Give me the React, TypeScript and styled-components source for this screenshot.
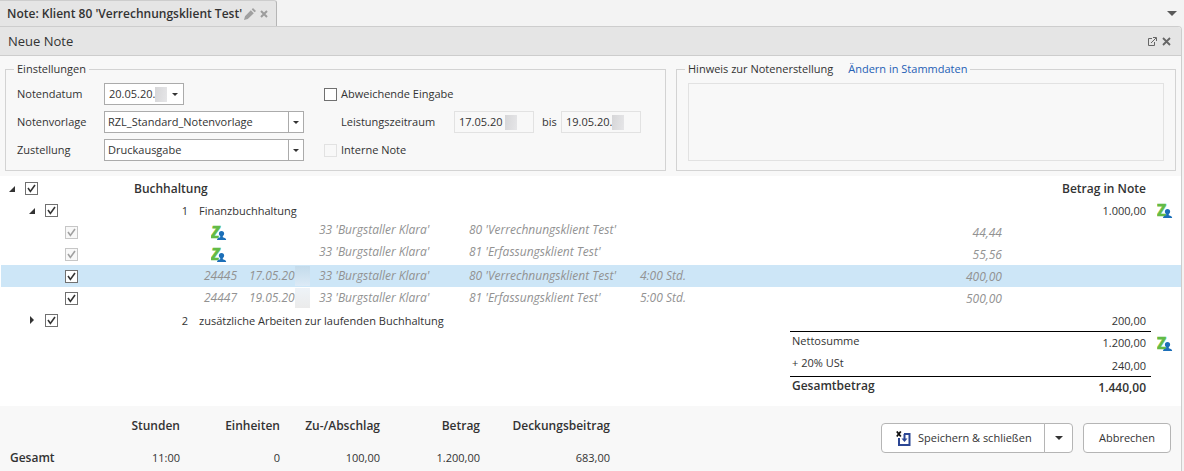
import React from 'react';
import styled, { createGlobalStyle, css } from 'styled-components';

const GlobalStyle = createGlobalStyle`
  * { box-sizing: border-box; }
  body {
    margin: 0;
    background: #f3f3f3;
    color: #333;
    font: 11px/16px "Open Sans", "Noto Sans", sans-serif;
  }
  button, input, select, textarea { font: inherit; color: inherit; }
  button { cursor: pointer; }
`;

const TabBar = styled.header`
  display: flex;
  align-items: stretch;
  justify-content: space-between;
  height: 26px;
  padding-right: 7px;
`;

const Tab = styled.div`
  display: flex;
  align-items: center;
  gap: 2px;
  padding: 0 6px 0 7px;
  background: #e5e5e5;
  border-top: 1px solid #cdcdcd;
  border-right: 1px solid #b5b5b5;
  border-top-right-radius: 3px;
  font-size: 12px;
  font-weight: 600;
`;

const IconButton = styled.button`
  display: inline-flex;
  align-items: center;
  justify-content: center;
  padding: 0;
  border: 0;
  background: none;
`;

const Panel = styled.main`
  margin-right: 2px;
  background: #fff;
  border: solid #cdcdcd;
  border-width: 1px 1px 1px 0;
  border-top-right-radius: 4px;
`;

const TitleBar = styled.div`
  display: flex;
  align-items: center;
  gap: 5px;
  height: 29px;
  padding: 0 10px 0 8px;
  background: #e5e5e5;
  border-bottom: 1px solid #cdcdcd;
  border-top-right-radius: 3px;
`;

const Title = styled.h1`
  flex: 1;
  margin: 0;
  font-size: 13px;
  font-weight: 400;
`;

const Settings = styled.section`
  display: flex;
  gap: 10px;
  padding: 5px;
  background: #f8f8f8;
`;

const Group = styled.fieldset<{ $grow?: boolean }>`
  display: flex;
  flex: ${(p) => (p.$grow ? '1 1 0' : '0 0 661px')};
  min-width: 0;
  margin: 0;
  padding: 6px 11px 9px;
  border: 1px solid #d3d3d3;
`;

const Legend = styled.legend`
  margin-left: -3px;
  padding: 0 3px;
`;

const StammdatenLink = styled.a`
  margin-left: 15px;
  color: #2560b5;
  text-decoration: none;
`;

const Fields = styled.div`
  display: grid;
  grid-template-columns: 87px 200px;
  grid-auto-rows: 22px;
  row-gap: 6px;
  align-items: center;
  margin-right: 20px;
`;

const Options = styled.div`
  display: grid;
  grid-auto-rows: 22px;
  row-gap: 6px;
`;

const OptionLine = styled.div<{ $indent?: boolean }>`
  display: flex;
  align-items: center;
  gap: 4px;
  padding-left: ${(p) => (p.$indent ? '17px' : '0')};
`;

const PeriodLabel = styled.span`
  width: 109px;
`;

const Until = styled.span`
  width: 15px;
  margin-left: 4px;
`;

const DateBox = styled.span<{ $readOnly?: boolean }>`
  display: flex;
  align-items: center;
  width: 80px;
  height: 22px;
  padding-left: 4px;
  background: ${(p) => (p.$readOnly ? 'transparent' : '#fff')};
  border: 1px solid ${(p) => (p.$readOnly ? '#e2e2e2' : '#ababab')};
`;

const DateInput = styled.input`
  width: 46px;
  padding: 0;
  border: 0;
  background: none;
  outline: 0;
`;

const Smudge = styled.span`
  width: 12px;
  height: 15px;
  background: linear-gradient(100deg, #d6d6d8, #e6e6e8);
`;

const RowSmudge = styled.span<{ $selected?: boolean }>`
  width: 15px;
  height: 20px;
  background: ${(p) => (p.$selected ? 'linear-gradient(#c3dbeb, #dceaf6)' : 'linear-gradient(#eef3f8, #ebebeb)')};
`;

const CaretButton = styled(IconButton)`
  flex: 1;
  height: 100%;
`;

const SelectBox = styled.span`
  display: grid;
  grid-template-columns: 1fr 15px;
  height: 22px;
  background: #fff;
  border: 1px solid #ababab;

  select {
    grid-area: 1 / 1 / 2 / 3;
    appearance: none;
    padding: 0 18px 0 3px;
    border: 0;
    background: none;
    outline: 0;
  }
`;

const SelectCaret = styled.span`
  grid-area: 1 / 2;
  display: flex;
  align-items: center;
  justify-content: center;
  border-left: 1px solid #ababab;
  pointer-events: none;
`;

const Note = styled.textarea`
  flex: 1;
  height: 78px;
  resize: none;
  background: transparent;
  border: 1px solid #e2e2e2;
`;

const CheckFrame = styled.span`
  display: inline-grid;
  width: 13px;
  height: 13px;

  input, svg { grid-area: 1 / 1; }
  input {
    appearance: none;
    width: 13px;
    height: 13px;
    margin: 0;
    background: #fff;
    border: 1px solid #707070;
  }
  svg { color: #333; pointer-events: none; }
  input:disabled { background: #f8f8f8; border-color: #e2e2e2; }
  input:disabled:checked { border-color: #c6c6c6; }
  input:disabled + svg { color: #a0a0a0; }
`;

const Positions = styled.table`
  width: 100%;
  padding: 1px 0 7px 1px;
  table-layout: fixed;
  border-spacing: 0;
`;

const Row = styled.tr<{ $kind?: 'group' | 'detail'; $selected?: boolean }>`
  background: ${(p) => (p.$selected ? '#cde6f7' : 'transparent')};
  ${(p) => p.$kind === 'group' && css`font-size: 12px; font-weight: 600;`}
  ${(p) => p.$kind === 'detail' && css`color: #929292; font-size: 12px; font-style: italic;`}
`;

const Cell = styled.td<{ $right?: number; $top?: boolean; $line?: boolean; $bold?: boolean }>`
  height: ${(p) => (p.$line ? '23px' : '22px')};
  padding: ${(p) => (p.$top ? '0 0 4px' : '0')};
  white-space: nowrap;
  vertical-align: middle;
  ${(p) => p.$right !== undefined && css`padding-right: ${p.$right}px; text-align: right;`}
  ${(p) => p.$line && css`border-top: 1px solid #000;`}
  ${(p) => p.$bold && css`font-size: 12px; font-weight: 600;`}
`;

const TextCell = styled(Cell)`
  padding-top: 2px;
`;

const SumLabel = styled(Cell)`
  padding: 0 0 4px 2px;
`;

const Tree = styled.div<{ $level: number }>`
  display: flex;
  align-items: center;
  padding-left: ${(p) => p.$level * 20 + 1}px;
`;

const Expander = styled(IconButton)`
  width: 20px;
  height: 16px;
  margin-right: 3px;
`;

const ExpanderGap = styled.span`
  width: 23px;
`;

const BadgeSvg = styled.svg`
  display: block;
`;

const IconSlot = styled.div<{ $indent: number }>`
  padding-left: ${(p) => p.$indent}px;
`;

const MaskedDate = styled.div`
  display: flex;
  align-items: center;
`;

const Footer = styled.footer`
  display: flex;
  align-items: flex-start;
  justify-content: space-between;
  padding: 4px 10px 0 0;
  background: #f8f8f8;
`;

const Summary = styled.table`
  table-layout: fixed;
  width: 610px;
  border-spacing: 0;

  th, td { padding: 0; text-align: right; height: 32px; }
  th { font-size: 12px; font-weight: 600; }
  tr > :first-child { padding-left: 10px; text-align: left; }
`;

const Actions = styled.div`
  display: flex;
  gap: 10px;
  padding-top: 13px;
`;

const Button = styled.button`
  display: flex;
  align-items: center;
  justify-content: center;
  height: 30px;
  padding: 0;
  background: #fff;
  border: 1px solid #b5b5b5;
  border-radius: 4px;
  white-space: nowrap;
`;

const SplitButton = styled.div`
  display: flex;
`;

const SaveButton = styled(Button)`
  gap: 7px;
  justify-content: flex-start;
  width: 164px;
  padding-left: 14px;
  border-radius: 4px 0 0 4px;
`;

const MoreButton = styled(Button)`
  width: 29px;
  margin-left: -1px;
  border-radius: 0 4px 4px 0;
`;

const CancelButton = styled(Button)`
  width: 88px;
`;

const Caret = ({ width = 6, color = '#333' }: { width?: number; color?: string }) => (
  <svg width={width} height={Math.ceil(width / 2)} viewBox="0 0 8 4" preserveAspectRatio="none" aria-hidden="true">
    <path d="M0 0h8L4 4z" fill={color} />
  </svg>
);

const ClientBadge = () => (
  <BadgeSvg width="16" height="22" viewBox="0 -4 16 22" aria-hidden="true">
    <text x="0" y="13" fontFamily="Open Sans, sans-serif" fontWeight="700" fontSize="16" fill="#62bb46" stroke="#62bb46" strokeWidth="0.7">Z</text>
    <circle cx="10.500" cy="8.500" r="2.600" fill="#1c6fb8" />
    <path d="M9.200 10h2.600v2.200c2 .4 3.400 1.200 3.400 2.800H6c0-1.600 1.200-2.400 3.200-2.800z" fill="#1c6fb8" />
  </BadgeSvg>
);

type CheckProps = { id?: string; label?: string; checked?: boolean; disabled?: boolean };

const Check = ({ id, label, checked = false, disabled = false }: CheckProps) => (
  <CheckFrame>
    <input type="checkbox" id={id} aria-label={label} defaultChecked={checked} disabled={disabled} />
    {checked && (
      <svg width="13" height="13" viewBox="0 0 13 13" aria-hidden="true">
        <path d="M3 6L5.400 9.400L10 3" fill="none" stroke="currentColor" strokeWidth="1.600" />
      </svg>
    )}
  </CheckFrame>
);

type TreeCellProps = { level: number; label: string; open?: boolean; leaf?: boolean; disabled?: boolean };

const TreeCell = ({ level, label, open, leaf, disabled }: TreeCellProps) => (
  <Cell>
    <Tree $level={level}>
      {leaf ? (
        <ExpanderGap />
      ) : (
        <Expander aria-label={open ? 'Zuklappen' : 'Aufklappen'} aria-expanded={!!open}>
          <svg width="8" height="8" viewBox="0 0 8 8" aria-hidden="true">
            <path d={open ? 'M7 2v6H1z' : 'M2 0l4 4-4 4z'} fill="#333" />
          </svg>
        </Expander>
      )}
      <Check label={label} checked disabled={disabled} />
    </Tree>
  </Cell>
);

type Detail = {
  nr?: string;
  date?: string;
  person: string;
  client: string;
  hours?: string;
  amount: string;
  selected?: boolean;
};

const details: Detail[] = [
  { person: "33 'Burgstaller Klara'", client: "80 'Verrechnungsklient Test'", amount: '44,44' },
  { person: "33 'Burgstaller Klara'", client: "81 'Erfassungsklient Test'", amount: '55,56' },
  { nr: '24445', date: '17.05.20', person: "33 'Burgstaller Klara'", client: "80 'Verrechnungsklient Test'", hours: '4:00 Std.', amount: '400,00', selected: true },
  { nr: '24447', date: '19.05.20', person: "33 'Burgstaller Klara'", client: "81 'Erfassungsklient Test'", hours: '5:00 Std.', amount: '500,00' },
];

const DetailRow = ({ nr, date, person, client, hours, amount, selected }: Detail) => {
  const linked = !nr;
  return (
    <Row $kind="detail" $selected={selected}>
      <TreeCell level={2} leaf label={`${person} ${client}`} disabled={linked} />
      <Cell />
      <Cell>{linked ? <IconSlot $indent={12}><ClientBadge /></IconSlot> : <IconSlot $indent={5}>{nr}</IconSlot>}</Cell>
      <Cell>
        {date && <MaskedDate>{date}<RowSmudge $selected={selected} /></MaskedDate>}
      </Cell>
      <Cell $top={linked}>{person}</Cell>
      <Cell $top={linked}>{client}</Cell>
      <Cell>{hours}</Cell>
      <TextCell $right={0}>{amount}</TextCell>
      <Cell />
      <Cell />
    </Row>
  );
};

const columns = [133, 65, 50, 70, 150, 171, 150, undefined, 149, 30];

export default function App() {
  return (
    <>
      <GlobalStyle />
      <TabBar>
        <Tab>
          Note: Klient 80 'Verrechnungsklient Test'
          <IconButton aria-label="Umbenennen">
            <svg width="12" height="12" viewBox="0 0 12 12" aria-hidden="true">
              <path d="M0 12l1-3.800L6.800 2.200 9.800 5.200 3.800 11zM7.700 1.400L9 0 12 3l-1.400 1.300z" fill="#a0a0a0" />
            </svg>
          </IconButton>
          <IconButton aria-label="Tab schließen">
            <svg width="12" height="10" viewBox="0 0 12 10" aria-hidden="true">
              <path d="M3 2l6 6M9 2L3 8" stroke="#9c9c9c" strokeWidth="2" />
            </svg>
          </IconButton>
        </Tab>
        <IconButton aria-label="Tabliste">
          <Caret width={10} color="#5a5a5a" />
        </IconButton>
      </TabBar>
      <Panel>
        <TitleBar>
          <Title>Neue Note</Title>
          <IconButton aria-label="In eigenem Fenster öffnen">
            <svg width="9" height="9" viewBox="0 0 9 9" fill="none" stroke="#666" aria-hidden="true">
              <path d="M4 1.500H.500v7h6V5M3 6l5-5M5 .500h3.500V4" />
            </svg>
          </IconButton>
          <IconButton aria-label="Schließen">
            <svg width="9" height="9" viewBox="0 0 9 9" aria-hidden="true">
              <path d="M1 1l7 7M8 1L1 8" stroke="#666" strokeWidth="1.800" />
            </svg>
          </IconButton>
        </TitleBar>

        <Settings>
          <Group>
            <Legend>Einstellungen</Legend>
            <Fields>
              <label htmlFor="datum">Notendatum</label>
              <DateBox>
                <DateInput id="datum" defaultValue="20.05.20." />
                <Smudge />
                <CaretButton aria-label="Kalender öffnen"><Caret /></CaretButton>
              </DateBox>
              <label htmlFor="vorlage">Notenvorlage</label>
              <SelectBox>
                <select id="vorlage"><option>RZL_Standard_Notenvorlage</option></select>
                <SelectCaret><Caret /></SelectCaret>
              </SelectBox>
              <label htmlFor="zustellung">Zustellung</label>
              <SelectBox>
                <select id="zustellung"><option>Druckausgabe</option></select>
                <SelectCaret><Caret /></SelectCaret>
              </SelectBox>
            </Fields>
            <Options>
              <OptionLine>
                <Check id="abweichend" />
                <label htmlFor="abweichend">Abweichende Eingabe</label>
              </OptionLine>
              <OptionLine $indent>
                <PeriodLabel as="label" htmlFor="von">Leistungszeitraum</PeriodLabel>
                <DateBox $readOnly>
                  <DateInput id="von" defaultValue="17.05.20" readOnly />
                  <Smudge />
                </DateBox>
                <Until as="label" htmlFor="bis">bis</Until>
                <DateBox $readOnly>
                  <DateInput id="bis" defaultValue="19.05.20." readOnly />
                  <Smudge />
                </DateBox>
              </OptionLine>
              <OptionLine>
                <Check id="intern" disabled />
                <label htmlFor="intern">Interne Note</label>
              </OptionLine>
            </Options>
          </Group>
          <Group $grow>
            <Legend>
              <label htmlFor="hinweis">Hinweis zur Notenerstellung</label>
              <StammdatenLink href="#stammdaten">Ändern in Stammdaten</StammdatenLink>
            </Legend>
            <Note id="hinweis" readOnly />
          </Group>
        </Settings>

        <Positions>
          <colgroup>
            {columns.map((width, i) => <col key={i} width={width} />)}
          </colgroup>
          <tbody>
            <Row $kind="group">
              <TreeCell level={0} open label="Buchhaltung" />
              <TextCell colSpan={6}>Buchhaltung</TextCell>
              <TextCell colSpan={2} $right={5}>Betrag in Note</TextCell>
              <Cell />
            </Row>
            <Row>
              <TreeCell level={1} open label="Finanzbuchhaltung" />
              <TextCell $right={11}>1</TextCell>
              <TextCell colSpan={5}>Finanzbuchhaltung</TextCell>
              <TextCell colSpan={2} $right={5}>1.000,00</TextCell>
              <Cell><IconSlot $indent={6}><ClientBadge /></IconSlot></Cell>
            </Row>
            {details.map((detail, i) => <DetailRow key={i} {...detail} />)}
            <Row>
              <TreeCell level={1} label="zusätzliche Arbeiten zur laufenden Buchhaltung" />
              <TextCell $right={11}>2</TextCell>
              <TextCell colSpan={5}>zusätzliche Arbeiten zur laufenden Buchhaltung</TextCell>
              <TextCell colSpan={2} $right={5}>200,00</TextCell>
              <Cell />
            </Row>
            <Row>
              <Cell colSpan={7} />
              <SumLabel $line>Nettosumme</SumLabel>
              <Cell $line $right={5}>1.200,00</Cell>
              <Cell><IconSlot $indent={6}><ClientBadge /></IconSlot></Cell>
            </Row>
            <Row>
              <Cell colSpan={7} />
              <SumLabel>+ 20% USt</SumLabel>
              <TextCell $right={5}>240,00</TextCell>
              <Cell />
            </Row>
            <Row>
              <Cell colSpan={7} />
              <SumLabel $line $bold>Gesamtbetrag</SumLabel>
              <Cell $line $bold $right={5}>1.440,00</Cell>
              <Cell />
            </Row>
          </tbody>
        </Positions>

        <Footer>
          <Summary>
            <colgroup>
              <col width={80} /><col width={100} /><col width={100} />
              <col width={100} /><col width={100} /><col width={130} />
            </colgroup>
            <thead>
              <tr>
                <td />
                <th scope="col">Stunden</th>
                <th scope="col">Einheiten</th>
                <th scope="col">Zu-/Abschlag</th>
                <th scope="col">Betrag</th>
                <th scope="col">Deckungsbeitrag</th>
              </tr>
            </thead>
            <tbody>
              <tr>
                <th scope="row">Gesamt</th>
                <td>11:00</td>
                <td>0</td>
                <td>100,00</td>
                <td>1.200,00</td>
                <td>683,00</td>
              </tr>
            </tbody>
          </Summary>
          <Actions>
            <SplitButton>
              <SaveButton>
                <svg width="15" height="15" viewBox="0 0 15 15" fill="none" aria-hidden="true">
                  <path d="M3 7v7h10.500V3H8" stroke="#2b4694" strokeWidth="2" />
                  <path d="M8.500 3v5" stroke="#2b4694" strokeWidth="2" />
                  <path d="M5.500 7.500h6l-3 3.500z" fill="#2b4694" />
                  <path d="M.800.500l4 5M4.800.500l-4 5" stroke="#111" strokeWidth="1.800" />
                </svg>
                Speichern &amp; schließen
              </SaveButton>
              <MoreButton aria-label="Weitere Speicheroptionen"><Caret width={8} /></MoreButton>
            </SplitButton>
            <CancelButton>Abbrechen</CancelButton>
          </Actions>
        </Footer>
      </Panel>
    </>
  );
}
